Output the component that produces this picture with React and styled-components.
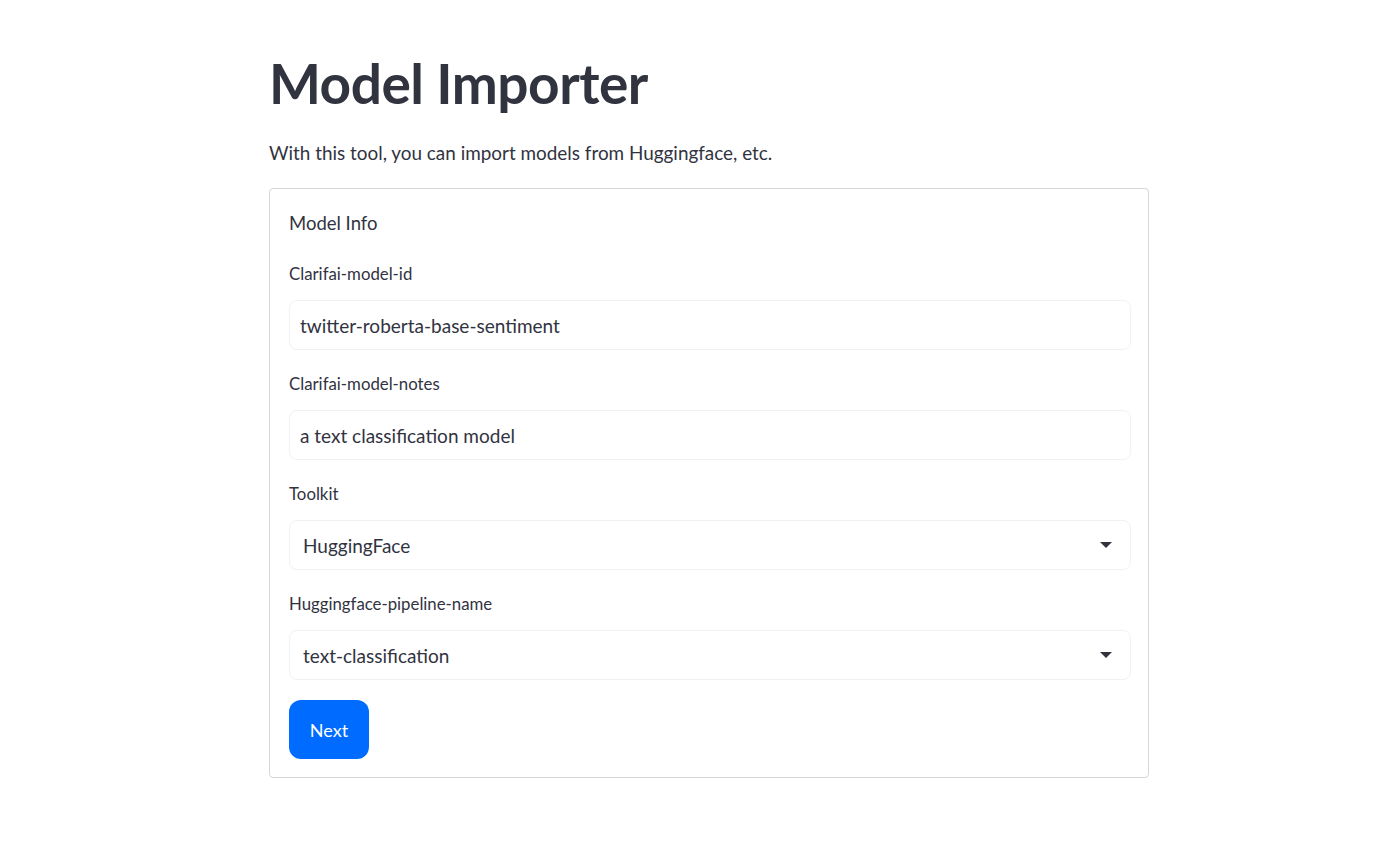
import React from "react";
import styled, { createGlobalStyle } from "styled-components";

const Global = createGlobalStyle`
  html, body { margin: 0; padding: 0; background: #ffffff; }
  body { font-family: "Lato", "Open Sans", sans-serif; color: rgb(49, 51, 63); }
  * { box-sizing: border-box; }
`;

const Main = styled.main`
  width: 880px;
  margin-left: 269px;
  padding-top: 50px;
  display: flex;
  flex-direction: column;
`;

const Title = styled.h1`
  margin: 0;
  font-size: 55px;
  font-weight: 700;
  line-height: 66px;
  letter-spacing: -0.5px;
  color: rgb(49, 51, 63);
`;

const Intro = styled.p`
  margin: 24px 0 22px;
  font-size: 18.9px;
  line-height: 26px;
`;

const Card = styled.form`
  border: 1px solid rgba(49, 51, 63, 0.2);
  border-radius: 4px;
  padding: 20px 17px 18px 19px;
  display: flex;
  flex-direction: column;
`;

const Heading = styled.div`
  font-size: 18.5px;
  line-height: 28px;
  margin-bottom: 27px;
`;

const Field = styled.div`
  display: flex;
  flex-direction: column;
  margin-bottom: 24px;
`;

const Label = styled.label`
  font-size: 16.8px;
  line-height: 20px;
  margin-bottom: 16px;
`;

const Box = styled.div`
  height: 50px;
  border: 1px solid rgb(240, 242, 246);
  border-radius: 8px;
  background: #fff;
  display: flex;
  align-items: center;
  padding: 0 ${(p) => (p.$select ? "17px 0 13px" : "10px")};
  font-size: 19px;
  color: rgb(49, 51, 63);
`;

const Value = styled.span`
  flex: 1;
`;

const Button = styled.button`
  align-self: flex-start;
  margin-top: -4px;
  width: 80px;
  height: 59px;
  border: none;
  border-radius: 12px;
  background: rgb(0, 108, 255);
  color: #fff;
  font-family: inherit;
  font-size: 18px;
`;

const Caret = () => (
  <svg width="14" height="8" viewBox="0 0 14 8">
    <path d="M1 1 L13 1 L7 7 Z" fill="rgb(49,51,63)" />
  </svg>
);

const fields = [
  { label: "Clarifai-model-id", value: "twitter-roberta-base-sentiment" },
  { label: "Clarifai-model-notes", value: "a text classification model" },
  { label: "Toolkit", value: "HuggingFace", select: true },
  { label: "Huggingface-pipeline-name", value: "text-classification", select: true },
];

export default function App() {
  return (
    <>
      <Global />
      <Main>
        <Title>Model Importer</Title>
        <Intro>With this tool, you can import models from Huggingface, etc.</Intro>
        <Card onSubmit={(e) => e.preventDefault()}>
          <Heading>Model Info</Heading>
          {fields.map((f) => (
            <Field key={f.label}>
              <Label>{f.label}</Label>
              <Box $select={f.select}>
                <Value>{f.value}</Value>
                {f.select && <Caret />}
              </Box>
            </Field>
          ))}
          <Button type="button">Next</Button>
        </Card>
      </Main>
    </>
  );
}
